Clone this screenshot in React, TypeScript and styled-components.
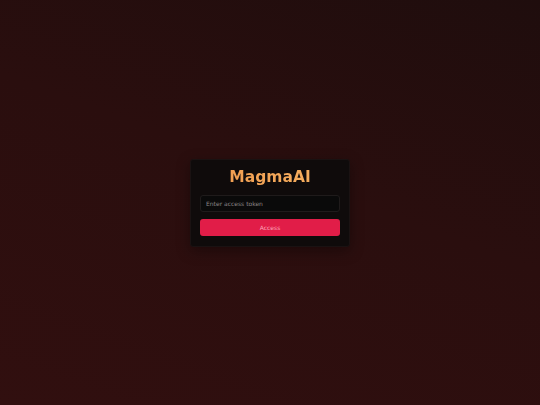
import React, { useState } from 'react'
import styled, { createGlobalStyle } from 'styled-components'

const GlobalStyle = createGlobalStyle`
  html, body, #root {
    margin: 0;
    padding: 0;
    height: 100%;
  }
  body {
    font-family: 'DejaVu Sans', 'Liberation Sans', sans-serif;
    background: #2a0e0e;
  }
  * {
    box-sizing: border-box;
  }
`

const Screen = styled.div`
  height: 100vh;
  display: flex;
  align-items: center;
  justify-content: center;
  background: linear-gradient(200deg, #1f0d0d 0%, #2a0e0e 45%, #310f0f 100%);
`

const Card = styled.div`
  width: 160px;
  padding: 8px 9px 10px;
  background: #0f0b0b;
  border: 1px solid #1a1212;
  border-radius: 3px;
  box-shadow: 0 4px 14px rgba(0, 0, 0, 0.35);
  display: flex;
  flex-direction: column;
`

const Title = styled.h1`
  margin: 0 0 8px;
  font-family: Verdana, 'DejaVu Sans', sans-serif;
  font-size: 15.5px;
  line-height: 19px;
  font-weight: 700;
  text-align: center;
  background: linear-gradient(90deg, #f09a4e, #f6b262);
  -webkit-background-clip: text;
  background-clip: text;
  color: transparent;
`

const TokenInput = styled.input`
  height: 17px;
  width: 100%;
  padding: 0 5px;
  margin-bottom: 7px;
  font-family: 'DejaVu Sans', sans-serif;
  font-size: 6px;
  color: #ddd;
  background: #0a0a0a;
  border: 1px solid #1f1b1b;
  border-radius: 3px;
  outline: none;

  &::placeholder {
    color: #8a8686;
  }
`

const Button = styled.button`
  height: 17px;
  width: 100%;
  border: none;
  border-radius: 3px;
  background: #e11d48;
  color: #fda4b8;
  font-family: 'DejaVu Sans', sans-serif;
  font-size: 6px;
  cursor: pointer;
`

const App: React.FC = () => {
  const [token, setToken] = useState<string>('')

  return (
    <>
      <GlobalStyle />
      <Screen>
        <Card>
          <Title>MagmaAI</Title>
          <TokenInput
            type='password'
            placeholder='Enter access token'
            value={token}
            onChange={e => setToken(e.target.value)}
          />
          <Button type='button'>Access</Button>
        </Card>
      </Screen>
    </>
  )
}

export default App
